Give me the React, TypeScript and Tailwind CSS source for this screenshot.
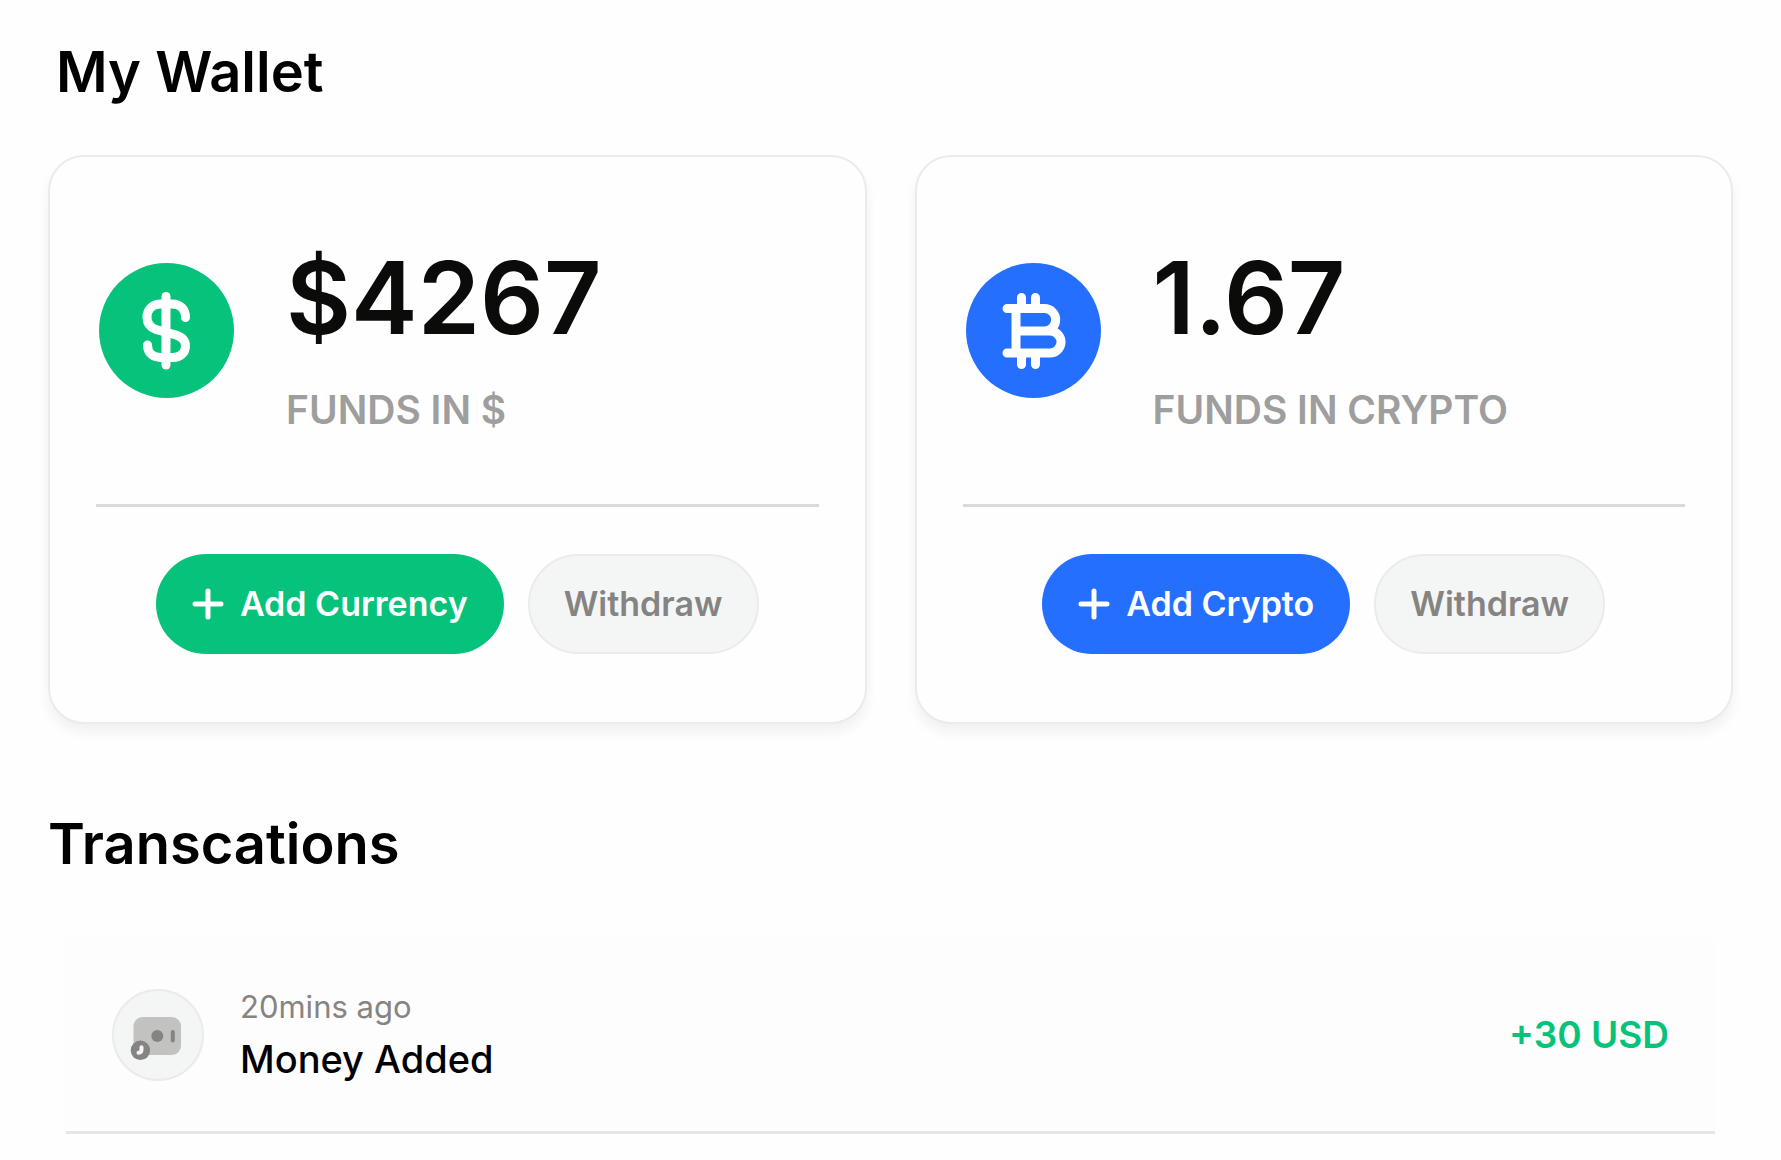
import type { ReactNode } from "react";

const font = "font-[Inter,'Liberation_Sans',sans-serif]";

function DollarIcon() {
  return (
    <svg viewBox="0 0 135 135" className="size-full" fill="none" stroke="white" strokeWidth="9" strokeLinecap="round" aria-hidden="true">
      <path d="M67 33.500V102" />
      <path d="M86.500 54.500C86.500 46 81 41 73 41H62C53.500 41 48 46.500 48 54.500C48 60.500 51.500 64.500 57 66.500L77 72C83 74 86.500 78 86.500 83C86.500 90 81 94.500 74 94.500H62C54 94.500 48.500 90 48.500 82" />
    </svg>
  );
}

function BitcoinIcon() {
  return (
    <svg viewBox="0 0 135 135" className="size-full" fill="none" stroke="white" strokeWidth="9" strokeLinecap="round" strokeLinejoin="round" aria-hidden="true">
      <path d="M41 45.600H78.500a11.200 11.200 0 0 1 0 22.400M50 68H84a11 11 0 0 1 0 22H41M50 45.600V90M55.500 34.500V45M69.500 34.500V45M55.500 91V101.500M69.500 91V101.500" />
    </svg>
  );
}

function PlusIcon() {
  return (
    <svg viewBox="0 0 32 32" className="size-8" fill="none" stroke="white" strokeWidth="5" strokeLinecap="round" aria-hidden="true">
      <path d="M16 3v26M3 16h26" />
    </svg>
  );
}

function MoneyIcon() {
  return (
    <svg viewBox="2 2 88 88" className="size-full" aria-hidden="true">
      <rect x="21.500" y="28" width="47.500" height="38" rx="9" fill="#c2c2c1" />
      <circle cx="45.300" cy="47" r="6" fill="#868482" />
      <rect x="58.800" y="41" width="4" height="12.500" rx="2" fill="#868482" />
      <circle cx="28.400" cy="61.300" r="9.700" fill="#868482" />
      <path d="M29.500 58.300V60.500Q29.500 63.500 26.500 63.800" fill="none" stroke="#f4f6f6" strokeWidth="4" strokeLinecap="round" />
    </svg>
  );
}

type WalletProps = {
  amount: string;
  label: string;
  action: string;
  fill: string;
  icon: ReactNode;
};

function WalletCard({ amount, label, action, fill, icon }: WalletProps) {
  return (
    <article className="rounded-[36px] border-2 border-[#ebebeb] bg-[#fefefe] px-[46px] pt-[88px] pb-[68px] shadow-[0_8px_12px_rgba(20,40,40,0.06)]">
      <div className="flex items-start gap-[52px] pl-[3px]">
        <div className={"mt-[18px] size-[135px] shrink-0 rounded-full " + fill}>{icon}</div>
        <div>
          <p className="text-[100px] leading-[106px] font-semibold text-[#0b0b0a]">{amount}</p>
          <p className="mt-[33px] text-[39px] leading-[52px] font-semibold text-[#9e9e9e]">{label}</p>
        </div>
      </div>
      <hr className="mt-[68px] border-t-[3px] border-[#dadada]" />
      <div className="mt-[47px] flex justify-center gap-6">
        <button className={"flex h-[100px] items-center gap-4 rounded-full px-9 text-[34px] leading-[48px] font-semibold text-white " + fill}>
          <PlusIcon />
          {action}
        </button>
        <button className="h-[100px] rounded-full border-2 border-[#ebebeb] bg-[#f4f6f6] px-[34px] text-[34px] leading-[48px] font-semibold text-[#868482]">Withdraw</button>
      </div>
    </article>
  );
}

export default function App() {
  return (
    <main className={"min-h-screen bg-[#fefefe] px-12 pt-9 pb-5 text-black " + font}>
      <h1 className="pl-2 text-[56px] leading-[72px] font-semibold">My Wallet</h1>
      <section className="mt-[47px] grid grid-cols-2 gap-12">
        <WalletCard amount="$4267" label="FUNDS IN $" action="Add Currency" fill="bg-[#07c27b]" icon={<DollarIcon />} />
        <WalletCard amount="1.67" label="FUNDS IN CRYPTO" action="Add Crypto" fill="bg-[#256fff]" icon={<BitcoinIcon />} />
      </section>
      <h2 className="mt-[84px] text-[56px] leading-[72px] font-semibold">Transcations</h2>
      <ul className="mt-[57px] px-[18px]">
        <li className="flex items-center border-b-[3px] border-[#e6e6e6] bg-[#fdfdfd] px-[46px] pt-[50px] pb-12">
          <div className="size-[92px] shrink-0 rounded-full border-2 border-[#ebebeb] bg-[#f4f6f6]">
            <MoneyIcon />
          </div>
          <div className="ml-9 flex-1">
            <p className="text-[31px] leading-[40px] text-[#868482]">20mins ago</p>
            <p className="mt-2 text-[38px] leading-[48px] font-medium">Money Added</p>
          </div>
          <p className="text-[37px] leading-[48px] font-semibold text-[#07c27b]">+30 USD</p>
        </li>
      </ul>
    </main>
  );
}
